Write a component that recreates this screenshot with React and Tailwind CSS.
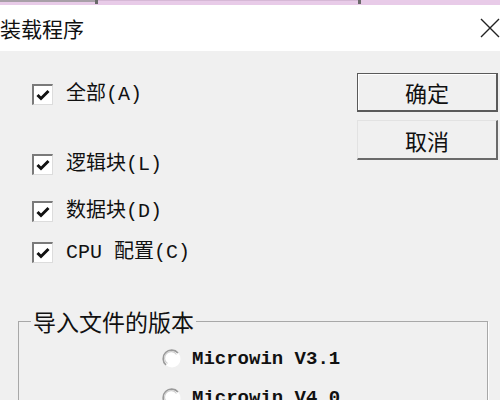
import React from 'react';

const mono = { fontFamily: '"Liberation Mono", "Noto Sans CJK SC", monospace' };
const cjk = { fontFamily: '"Noto Sans CJK SC", "Noto Sans", sans-serif' };

const CheckBox = () => (
  <div className="w-[21px] h-[21px] shrink-0 bg-white border-t-2 border-l-2 border-t-[#7a7a7a] border-l-[#7a7a7a] border-b border-r border-b-[#dcdcdc] border-r-[#dcdcdc] flex items-center justify-center">
    <svg width="14" height="12" viewBox="0 0 14 12">
      <path d="M1.5 6 L5 9.5 L12.5 2" fill="none" stroke="#111" strokeWidth="3" />
    </svg>
  </div>
);

const Radio = () => (
  <svg width="20" height="20" viewBox="0 0 20 20" className="shrink-0">
    <circle cx="10" cy="10" r="8.5" fill="#fff" />
    <path d="M16 4 A8.5 8.5 0 1 0 4 16" fill="none" stroke="#9a9a9a" strokeWidth="1.6" />
    <path d="M14.5 5.5 A6.5 6.5 0 1 0 5.5 14.5" fill="none" stroke="#d0d0d0" strokeWidth="1.2" />
  </svg>
);

const CheckRow = ({ label, className }) => (
  <div className={'flex items-center gap-[13px] h-[21px] shrink-0 ' + className}>
    <CheckBox />
    <span className="text-[20px] leading-none text-[#111] whitespace-nowrap" style={mono}>{label}</span>
  </div>
);

export default function App() {
  return (
    <div className="w-[500px] h-[400px] overflow-hidden bg-[#f0f0f0] flex flex-col">
      <div className="h-[5px] shrink-0 bg-[#e8cbe8] flex items-start">
        <div className="w-[95px] h-[2px] bg-[#a8a0a8]" />
        <div className="w-[3px] h-[4px] bg-[#6a6a6a]" />
        <div className="w-[260px] h-[1px] bg-[#d6b8d6]" />
        <div className="w-[3px] h-[4px] bg-[#6a6a6a]" />
      </div>
      <div className="h-[46px] shrink-0 bg-white flex items-center justify-between">
        <span className="text-[21px] leading-none text-[#111]" style={cjk}>装载程序</span>
        <svg width="20" height="20" viewBox="0 0 20 20">
          <path d="M1 1 L19 19 M19 1 L1 19" stroke="#222" strokeWidth="1.4" />
        </svg>
      </div>

      <div className="flex justify-between shrink-0">
        <div className="pl-[32px] pt-[33px] flex flex-col">
          <CheckRow label="全部(A)" className="" />
          <CheckRow label="逻辑块(L)" className="mt-[49px]" />
          <CheckRow label="数据块(D)" className="mt-[26px]" />
          <CheckRow label="CPU 配置(C)" className="mt-[20px]" />
        </div>
        <div className="pt-[22px] pr-[2px] flex flex-col gap-[8px]">
          <button className="w-[141px] h-[39px] bg-[#f0f0f0] border border-[#5a5a5a] border-r-2 border-b-2 shadow-[inset_1px_1px_0_#ffffff] flex items-center justify-center text-[22px] leading-none text-[#111]" style={cjk}>
            确定
          </button>
          <button className="w-[141px] h-[40px] bg-[#f0f0f0] border-t border-l border-[#e2e2e2] border-r-2 border-b-2 border-r-[#6a6a6a] border-b-[#6a6a6a] flex items-center justify-center text-[22px] leading-none text-[#111]" style={cjk}>
            取消
          </button>
        </div>
      </div>

      <fieldset className="shrink-0 mt-[44px] ml-[18px] mr-[12px] border border-[#a8a8a8] shadow-[1px_1px_0_#ffffff] pl-[12px] pb-[20px]">
        <legend className="px-[2px] text-[23px] leading-[28px] text-[#111]" style={cjk}>导入文件的版本</legend>
        <div className="flex flex-col pl-[131px]">
          <div className="mt-[14px] flex items-center gap-[10px]">
            <Radio />
            <span className="text-[19px] leading-none text-[#111] font-bold" style={mono}>Microwin V3.1</span>
          </div>
          <div className="mt-[19px] flex items-center gap-[10px]">
            <Radio />
            <span className="text-[19px] leading-none text-[#111] font-bold" style={mono}>Microwin V4.0</span>
          </div>
        </div>
      </fieldset>
    </div>
  );
}
